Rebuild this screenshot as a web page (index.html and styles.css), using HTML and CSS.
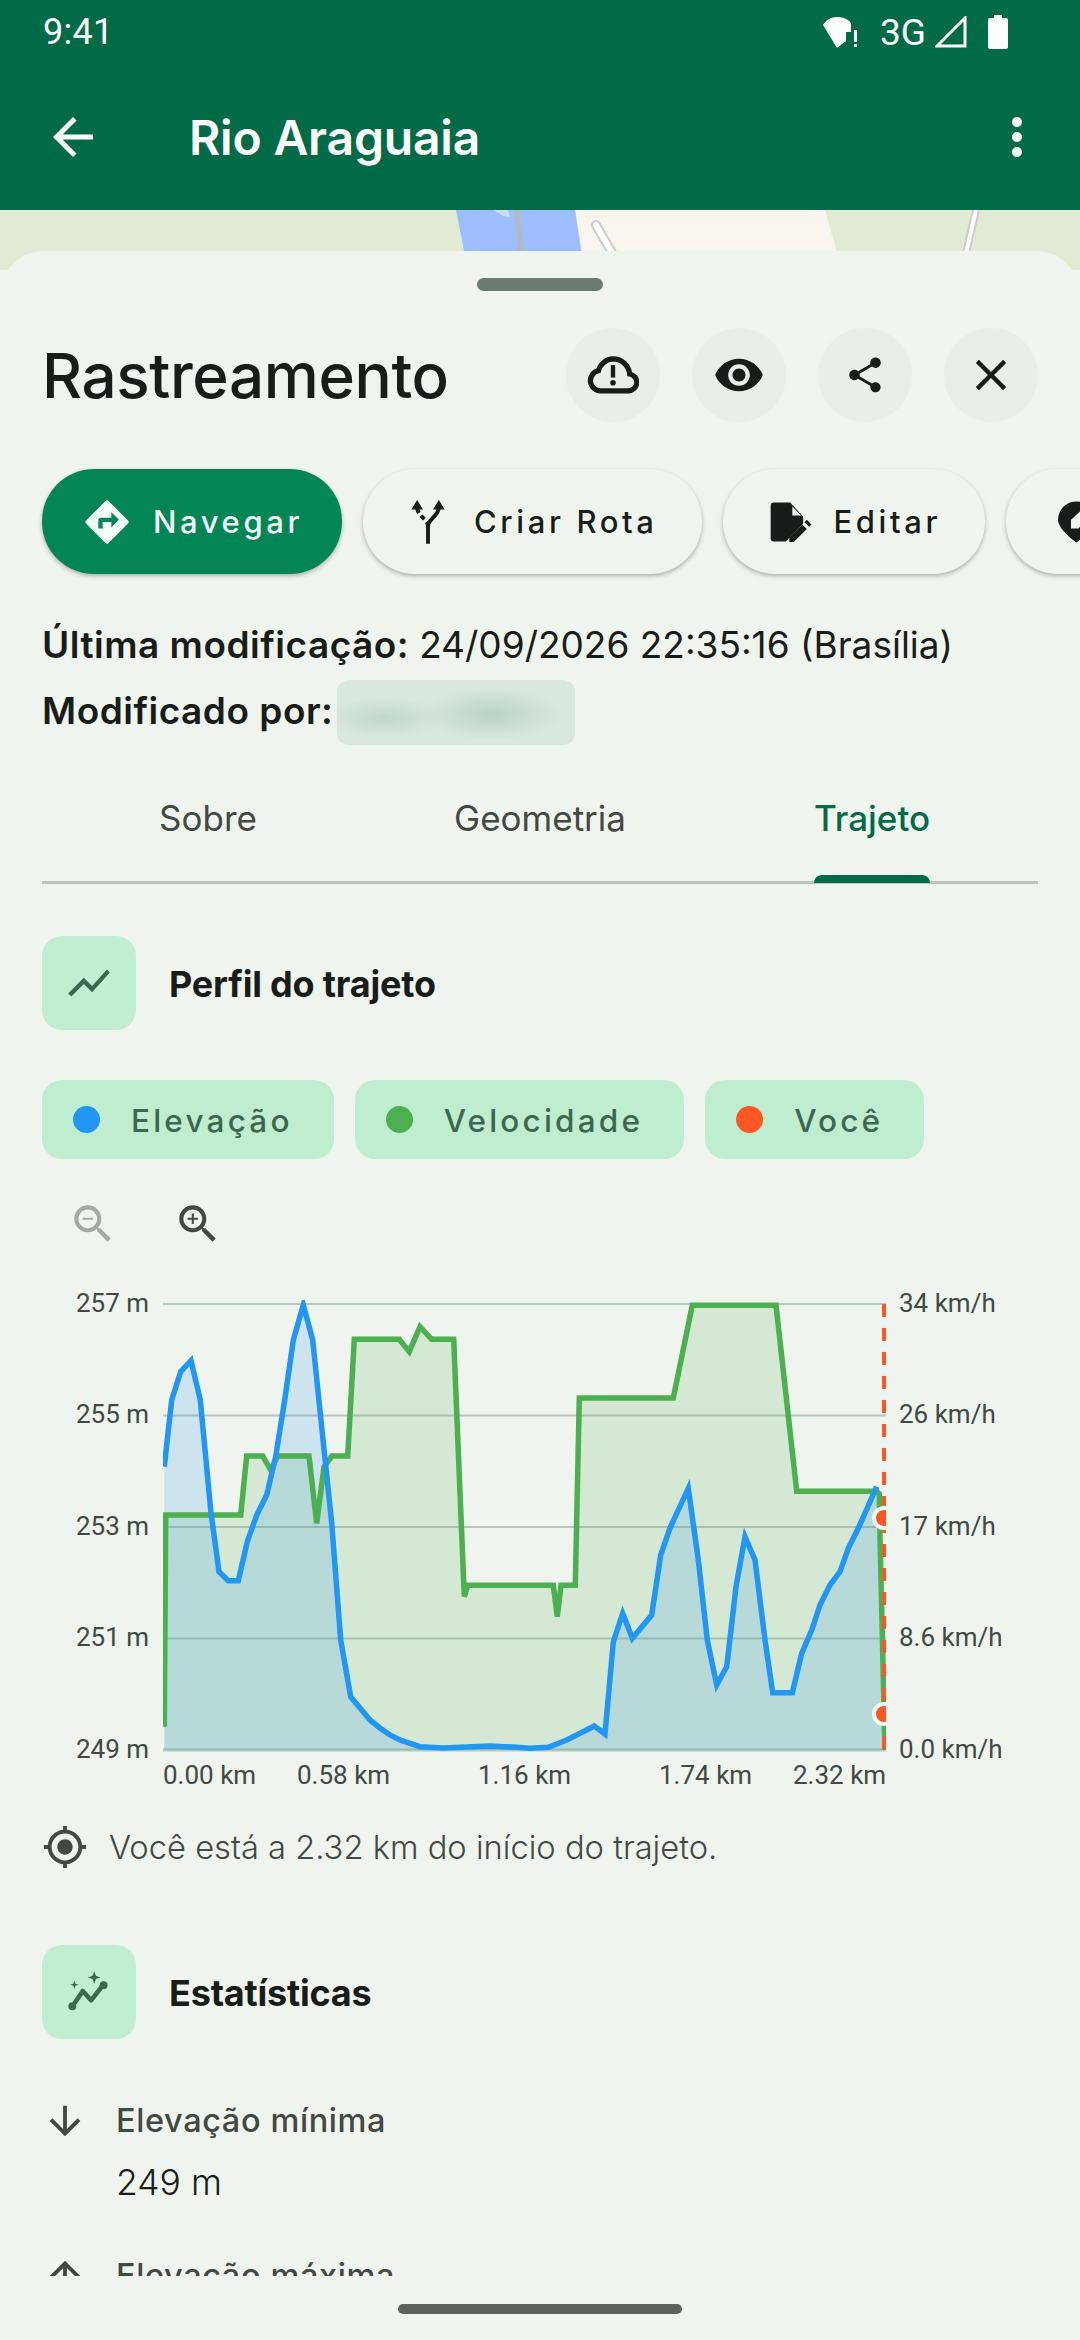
FILE: index.html
```html
<!DOCTYPE html>
<html lang="pt">
<head>
<meta charset="utf-8">
<title>Rio Araguaia</title>
<link rel="stylesheet" href="styles.css">
</head>
<body>
<div class="app">
  <header class="top">
    <div class="status">
      <span class="time">9:41</span>
      <div class="status-icons">
        <svg class="st-wifi" viewBox="0 0 38 32"><path d="M14 32 0 9C3 4 8 1 14 1s11 2 14 6v9h-5v9z"/><rect x="31" y="14" width="3" height="12"/><rect x="31" y="28" width="3" height="3"/></svg>
        <span class="net">3G</span>
        <svg class="st-signal" viewBox="0 0 32 32"><path d="M30 2v28H2z" fill="none" stroke="#fff" stroke-width="3"/></svg>
        <svg class="st-batt" viewBox="0 0 20 34"><path d="M6 0h8v3h4a2 2 0 0 1 2 2v27a2 2 0 0 1-2 2H2a2 2 0 0 1-2-2V5a2 2 0 0 1 2-2h4z"/></svg>
      </div>
    </div>
    <div class="appbar">
      <svg class="ic ic-white ic-bar" viewBox="0 0 24 24"><path d="M20 11H7.83l5.59-5.59L12 4l-8 8 8 8 1.41-1.41L7.83 13H20v-2z"/></svg>
      <h1 class="apptitle">Rio Araguaia</h1>
      <svg class="ic ic-white ic-bar ic-more" viewBox="0 0 24 24"><path d="M12 8c1.1 0 2-.9 2-2s-.9-2-2-2-2 .9-2 2 .9 2 2 2zm0 2c-1.1 0-2 .9-2 2s.9 2 2 2 2-.9 2-2-.9-2-2-2zm0 6c-1.1 0-2 .9-2 2s.9 2 2 2 2-.9 2-2-.9-2-2-2z"/></svg>
    </div>
  </header>

  <main class="mapwrap">
    <svg class="mapbg" viewBox="0 210 1080 60" preserveAspectRatio="xMinYMin slice">
      <rect x="0" y="210" width="1080" height="60" fill="#e1ebd3"/>
      <polygon points="575,210 825,210 842,270 585,270" fill="#f8f5ef"/>
      <polygon points="456,210 575,210 584,270 468,270" fill="#9dbdff"/>
      <polygon points="494,210 508,210 510,217 503,216" fill="#cfdcf8"/>
      <path d="M516.5 210 523 270" stroke="#b5b9bd" stroke-width="5" fill="none"/>
      <path d="M596 225 622 270" stroke="#cfcdcb" stroke-width="10" fill="none" stroke-linecap="round"/>
      <path d="M596 225 622 270" stroke="#fff" stroke-width="6" fill="none" stroke-linecap="round"/>
      <path d="M976 210 962 270" stroke="#cfcdcb" stroke-width="8" fill="none"/>
      <path d="M976 210 962 270" stroke="#fff" stroke-width="4" fill="none"/>
    </svg>

    <section class="sheet">
      <div class="handle"></div>
      <div class="scroll">
        <div class="title-row">
          <h2 class="title">Rastreamento</h2>
          <div class="actions">
            <button class="round"><svg class="ic" viewBox="0 0 24 24"><path d="M6.200 19.300H19a3.900 3.900 0 0 0 .7-7.750A7.700 7.700 0 0 0 12 4.600a7.200 7.200 0 0 0-6.700 5.400 4.700 4.700 0 0 0 .9 9.300z" fill="none" stroke="#191d19" stroke-width="2.400"/><rect x="11" y="7.400" width="2" height="5.800"/><circle cx="12" cy="15.600" r="1.300"/></svg></button>
            <button class="round"><svg class="ic" viewBox="0 0 24 24"><path d="M12 4.500C7 4.500 2.730 7.610 1 12c1.730 4.390 6 7.500 11 7.500s9.270-3.110 11-7.500c-1.730-4.390-6-7.500-11-7.500zM12 17c-2.760 0-5-2.240-5-5s2.240-5 5-5 5 2.240 5 5-2.240 5-5 5zm0-8c-1.660 0-3 1.340-3 3s1.340 3 3 3 3-1.340 3-3-1.340-3-3-3z"/></svg></button>
            <button class="round"><svg class="ic ic-share" viewBox="0 0 24 24"><path d="M18 16.080c-.76 0-1.440.3-1.960.77L8.910 12.700c.05-.23.09-.46.09-.7s-.04-.47-.09-.7l7.050-4.110c.54.5 1.250.81 2.040.81 1.660 0 3-1.340 3-3s-1.340-3-3-3-3 1.340-3 3c0 .24.04.47.09.7L8.040 9.810C7.500 9.310 6.790 9 6 9c-1.660 0-3 1.340-3 3s1.340 3 3 3c.79 0 1.500-.31 2.040-.81l7.120 4.160c-.05.21-.08.43-.08.65 0 1.610 1.310 2.920 2.920 2.920s2.920-1.310 2.920-2.920-1.310-2.920-2.920-2.920z"/></svg></button>
            <button class="round"><svg class="ic" viewBox="0 0 24 24"><path d="M19 6.410L17.590 5 12 10.590 6.410 5 5 6.410 10.590 12 5 17.590 6.410 19 12 13.410 17.590 19 19 17.590 13.410 12z"/></svg></button>
          </div>
        </div>

        <div class="chips">
          <button class="chip chip-primary"><svg class="ic" viewBox="0 0 24 24"><path d="M21.710 11.290l-9-9c-.39-.39-1.020-.39-1.410 0l-9 9c-.39.39-.39 1.020 0 1.410l9 9c.39.39 1.020.39 1.410 0l9-9c.39-.38.39-1.010 0-1.410zM14 14.500V12h-4v3H8v-4c0-.55.45-1 1-1h5V7.500l3.500 3.500-3.500 3.500z"/></svg><span>Navegar</span></button>
          <button class="chip"><svg class="ic" viewBox="0 0 24 24"><path d="M12 22v-8c0-3.500 5-4.500 5-9" fill="none" stroke="#191d19" stroke-width="1.800"/><path d="M12 14c0-3.500-5-4.500-5-9" fill="none" stroke="#191d19" stroke-width="1.800" stroke-dasharray="2.200 1.600"/><path d="M17 1.800l2.700 4.400h-5.400zM7 1.800l2.700 4.400H4.300z"/></svg><span>Criar Rota</span></button>
          <button class="chip"><svg class="ic" viewBox="0 0 24 24"><path fill-rule="evenodd" d="M5.500 3H13l6 6.500v3.200L11 21H5.500A1.500 1.500 0 0 1 4 19.500v-15A1.500 1.500 0 0 1 5.500 3zm8.500 1.800V9h4z"/><path d="M12.600 21.200v-2.100l6-6 2.100 2.100-6 6zM19.600 12.100l1.100-1.100 2.100 2.100-1.100 1.100z"/></svg><span>Editar</span></button>
          <button class="chip chip-cut" aria-label="Marcar"><svg class="ic" viewBox="0 0 24 24"><path d="M14.500 2.500A8.500 8.500 0 0 0 6 11c0 4.600 8.500 10.500 8.500 10.500S23 15.600 23 11a8.500 8.500 0 0 0-8.500-8.500z"/><path d="M12 15v-4l7-6.500 3 3-6.500 7.500z" fill="#eff4ee"/></svg></button>
        </div>

        <div class="meta">
          <p class="meta-line"><b>Última modificação:</b><span>24/09/2026 22:35:16 (Brasília)</span></p>
          <p class="meta-line"><b>Modificado por:</b><span class="blurred"></span></p>
        </div>

        <nav class="tabs">
          <div class="tab"><span class="tab-label">Sobre</span></div>
          <div class="tab"><span class="tab-label">Geometria</span></div>
          <div class="tab tab-on"><span class="tab-label">Trajeto</span></div>
        </nav>

        <div class="sec-head sec-first">
          <div class="sec-icon"><svg class="ic ic-sec" viewBox="0 0 24 24"><path d="M3.500 18.490l6-6.010 4 4L22 6.920l-1.410-1.410-7.090 7.970-4-4L2 16.990z"/></svg></div>
          <h3 class="sec-title">Perfil do trajeto</h3>
        </div>

        <div class="filters">
          <div class="filter"><i class="dot dot-blue"></i><span>Elevação</span></div>
          <div class="filter"><i class="dot dot-green"></i><span>Velocidade</span></div>
          <div class="filter"><i class="dot dot-orange"></i><span>Você</span></div>
        </div>

        <div class="zooms">
          <svg class="ic ic-zoom ic-off" viewBox="0 0 24 24"><path d="M15.500 14h-.79l-.28-.27C15.410 12.590 16 11.110 16 9.500 16 5.910 13.090 3 9.500 3S3 5.910 3 9.500 5.910 16 9.500 16c1.610 0 3.090-.59 4.230-1.570l.27.28v.79l5 4.990L20.490 19l-4.990-5zm-6 0C7.010 14 5 11.990 5 9.500S7.010 5 9.500 5 14 7.010 14 9.500 11.990 14 9.500 14zM7 9h5v1H7z"/></svg>
          <svg class="ic ic-zoom" viewBox="0 0 24 24"><path d="M15.500 14h-.79l-.28-.27C15.410 12.590 16 11.110 16 9.500 16 5.910 13.090 3 9.500 3S3 5.910 3 9.500 5.910 16 9.500 16c1.610 0 3.090-.59 4.230-1.570l.27.28v.79l5 4.990L20.490 19l-4.990-5zm-6 0C7.010 14 5 11.990 5 9.500S7.010 5 9.500 5 14 7.010 14 9.500 11.990 14 9.500 14zM12 10h-2v2H9v-2H7V9h2V7h1v2h2v1z"/></svg>
        </div>

        <svg class="chart" viewBox="42 1280 1000 520">
          <defs><clipPath id="plot"><rect x="163" y="1300" width="723" height="453"/></clipPath></defs>
          <g class="grid">
            <line x1="163" x2="886" y1="1304" y2="1304"/>
            <line x1="163" x2="886" y1="1415.500" y2="1415.500"/>
            <line x1="163" x2="886" y1="1527" y2="1527"/>
            <line x1="163" x2="886" y1="1638.500" y2="1638.500"/>
            <line x1="163" x2="886" y1="1750" y2="1750" class="grid-base"/>
          </g>
          <g class="lab lab-end">
            <text x="149" y="1312">257 m</text><text x="149" y="1423">255 m</text><text x="149" y="1535">253 m</text><text x="149" y="1646">251 m</text><text x="149" y="1758">249 m</text>
          </g>
          <g class="lab">
            <text x="899" y="1312">34 km/h</text><text x="899" y="1423">26 km/h</text><text x="899" y="1535">17 km/h</text><text x="899" y="1646">8.6 km/h</text><text x="899" y="1758">0.0 km/h</text>
            <text x="163" y="1784">0.00 km</text><text x="297" y="1784">0.58 km</text><text x="478" y="1784">1.16 km</text><text x="659" y="1784">1.74 km</text><text x="793" y="1784">2.32 km</text>
          </g>
          <g clip-path="url(#plot)">
            <polygon class="fill-green" points="164.300,1750 164.300,1726.700 165.700,1515 240.700,1515 246.700,1456 262.700,1456 270.700,1470 277.700,1456 309,1456 316.700,1523.300 324,1466.700 332,1456 347.700,1456 354.300,1339.300 399.300,1339.300 409.300,1351.700 420,1326.700 431.700,1339.300 453.700,1339.300 464.300,1596.700 467.700,1585.300 553.300,1585.300 557.300,1616.700 561,1585.300 575.300,1585.300 579.300,1398 673.300,1398 692.300,1305.300 776,1305.300 796.700,1491.300 876.700,1491.300 879.300,1494 880,1536.700 885,1750"/>
            <polygon class="fill-blue" points="164.300,1750 164.300,1466.700 171.700,1400 180.700,1371.700 191,1360.700 200.300,1400 211,1513 219,1571.700 228.300,1580.700 238.300,1580.700 247.300,1541.700 256.700,1515 266.700,1495 275.700,1456.700 285,1398 293.300,1340 303.300,1305 312.700,1340 322.700,1436.700 331.700,1523 340.700,1640 350.700,1696.700 360,1708 370,1720 380,1728 390,1735 400,1740 420,1746.700 443,1748 490,1746 516.700,1747.300 530,1748.300 548.300,1747.300 566.700,1740 594.300,1726 605,1734 613.300,1641.700 622.700,1613.300 632.300,1638.300 651.700,1615 660.700,1555 670,1528 688.300,1488.300 698.300,1560 707.300,1640 716.700,1685 726.700,1666.700 736,1586.700 745,1536.700 755,1560 765,1640 772.700,1692.700 792.300,1692.700 801.700,1653.300 811.700,1630 820,1605 830,1585 840,1571.700 848.300,1548.300 858.300,1528.300 876.700,1486.700 884,1750"/>
            <polyline class="line-green" points="164.300,1726.700 165.700,1515 240.700,1515 246.700,1456 262.700,1456 270.700,1470 277.700,1456 309,1456 316.700,1523.300 324,1466.700 332,1456 347.700,1456 354.300,1339.300 399.300,1339.300 409.300,1351.700 420,1326.700 431.700,1339.300 453.700,1339.300 464.300,1596.700 467.700,1585.300 553.300,1585.300 557.300,1616.700 561,1585.300 575.300,1585.300 579.300,1398 673.300,1398 692.300,1305.300 776,1305.300 796.700,1491.300 876.700,1491.300 879.300,1494 880,1536.700 885,1750"/>
            <polyline class="line-blue" points="164.300,1466.700 171.700,1400 180.700,1371.700 191,1360.700 200.300,1400 211,1513 219,1571.700 228.300,1580.700 238.300,1580.700 247.300,1541.700 256.700,1515 266.700,1495 275.700,1456.700 285,1398 293.300,1340 303.300,1305 312.700,1340 322.700,1436.700 331.700,1523 340.700,1640 350.700,1696.700 360,1708 370,1720 380,1728 390,1735 400,1740 420,1746.700 443,1748 490,1746 516.700,1747.300 530,1748.300 548.300,1747.300 566.700,1740 594.300,1726 605,1734 613.300,1641.700 622.700,1613.300 632.300,1638.300 651.700,1615 660.700,1555 670,1528 688.300,1488.300 698.300,1560 707.300,1640 716.700,1685 726.700,1666.700 736,1586.700 745,1536.700 755,1560 765,1640 772.700,1692.700 792.300,1692.700 801.700,1653.300 811.700,1630 820,1605 830,1585 840,1571.700 848.300,1548.300 858.300,1528.300 876.700,1486.700"/>
            <line class="marker" x1="884" x2="884" y1="1304" y2="1750"/>
            <circle class="pin" cx="884" cy="1518" r="10"/>
            <circle class="pin" cx="884" cy="1714" r="10"/>
          </g>
        </svg>

        <div class="here">
          <svg class="ic ic-here" viewBox="0 0 24 24"><path d="M12 8c-2.210 0-4 1.790-4 4s1.790 4 4 4 4-1.790 4-4-1.790-4-4-4zm8.940 3c-.46-4.170-3.770-7.480-7.940-7.940V1h-2v2.060C6.830 3.520 3.520 6.830 3.060 11H1v2h2.060c.46 4.170 3.770 7.480 7.940 7.940V23h2v-2.060c4.170-.46 7.480-3.770 7.940-7.940H23v-2h-2.060zM12 19c-3.870 0-7-3.130-7-7s3.130-7 7-7 7 3.130 7 7-3.130 7-7 7z"/></svg>
          <span>Você está a 2.32 km do início do trajeto.</span>
        </div>

        <div class="sec-head sec-stats">
          <div class="sec-icon"><svg class="ic ic-sec" viewBox="0 0 24 24"><path d="M4 19l5-7.500 4 4.500 5.500-7" fill="none" stroke="#3e6751" stroke-width="2.200" stroke-linecap="round" stroke-linejoin="round"/><circle cx="4" cy="18.800" r="1.900"/><circle cx="19" cy="8.700" r="1.900"/><path d="M14.500 2l.8 2.200 2.200.8-2.200.8-.8 2.200-.8-2.200-2.200-.8 2.200-.8zM5 6.500l.5 1.500 1.500.5-1.500.5-.5 1.500-.5-1.500L3 8.500l1.500-.5z"/></svg></div>
          <h3 class="sec-title">Estatísticas</h3>
        </div>

        <div class="stat stat-first">
          <svg class="ic ic-stat" viewBox="0 0 24 24"><path d="M20 12l-1.410-1.410L13 16.170V4h-2v12.170l-5.580-5.590L4 12l8 8 8-8z"/></svg>
          <div><div class="stat-label">Elevação mínima</div><div class="stat-value">249 m</div></div>
        </div>
        <div class="stat">
          <svg class="ic ic-stat" viewBox="0 0 24 24"><path d="M4 12l1.410 1.410L11 7.830V20h2V7.830l5.580 5.590L20 12l-8-8-8 8z"/></svg>
          <div><div class="stat-label">Elevação máxima</div></div>
        </div>
      </div>
      <footer class="navbar"><div class="pill"></div></footer>
    </section>
  </main>
</div>
</body>
</html>
```
FILE: styles.css
```css
* { box-sizing: border-box; margin: 0; padding: 0; }
html, body { width: 1080px; height: 2340px; overflow: hidden; }
body { font-family: "Inter", "Noto Sans", sans-serif; color: #191d19; background: #eff4ee; }
.app { width: 1080px; height: 2340px; display: flex; flex-direction: column; }

.top { background: #016a46; color: #fff; height: 210px; flex: none; }
.status { height: 64px; padding: 0 72px 0 43px; display: flex; justify-content: space-between; align-items: center; }
.time { font-family: "Roboto", sans-serif; font-size: 36px; letter-spacing: .3px; }
.status-icons { display: flex; align-items: center; fill: #fff; }
.st-wifi { width: 38px; height: 32px; margin-right: 19px; }
.st-signal { width: 32px; height: 32px; margin-left: 9px; }
.st-batt { width: 20px; height: 34px; margin-left: 21px; }
.net { font-family: "Roboto", sans-serif; font-size: 37px; }
.appbar { height: 146px; display: flex; align-items: center; padding-left: 43px; }
.apptitle { font-size: 48px; font-weight: 600; margin-left: 86px; flex: 1; letter-spacing: -.2px; }

.ic { width: 52px; height: 52px; display: block; fill: #191d19; flex: none; }
.ic-white { fill: #fff; }
.ic-bar { width: 60px; height: 60px; }
.ic-more { margin-right: 33px; }
.ic-share { width: 42px; height: 42px; }

.mapwrap { position: relative; flex: 1; min-height: 0; display: flex; flex-direction: column; padding-top: 41px; }
.mapbg { position: absolute; top: 0; left: 0; width: 1080px; height: 60px; }
.sheet { position: relative; flex: 1; min-height: 0; background: #eff4ee; border-radius: 44px 44px 0 0; display: flex; flex-direction: column; }
.handle { width: 126px; height: 13px; border-radius: 7px; background: #6c7b71; margin: 27px auto 0; flex: none; }
.scroll { flex: 1; min-height: 0; overflow: hidden; }
.navbar { height: 64px; flex: none; display: flex; justify-content: center; padding-top: 28px; }
.pill { width: 284px; height: 10px; border-radius: 5px; background: #5f625f; }

.title-row { margin-top: 37px; padding: 0 42px; height: 94px; display: flex; justify-content: space-between; align-items: center; }
.title { font-size: 62px; font-weight: 500; letter-spacing: -.4px; }
.actions { display: flex; gap: 32px; }
.round { width: 94px; height: 94px; border: 0; border-radius: 50%; background: #e8efe8; display: flex; align-items: center; justify-content: center; }

.chips { margin-top: 47px; padding-left: 42px; display: flex; gap: 21px; width: 1400px; height: 108px; }
.chip { flex: none; height: 105px; border: 0; border-radius: 52px; padding: 0 44px 0 39px; background: #eff4ee; display: flex; align-items: center; gap: 20px; font-family: "Inter", sans-serif; font-size: 31px; font-weight: 500; letter-spacing: 3.6px; color: #191d19; box-shadow: 0 2px 4px rgba(0,0,0,.28); }
.chip-primary { background: #038556; color: #f2fff8; padding-right: 39px; }
.chip-primary .ic { fill: #f2fff8; }
.chip-cut { width: 200px; }

.meta { margin-top: 34px; padding: 0 42px; }
.meta-line { height: 66px; display: flex; align-items: center; font-size: 37px; gap: 10px; white-space: pre; }
.meta-line b { font-weight: 600; letter-spacing: .5px; }
.blurred { width: 238px; height: 65px; margin-top: 4px; margin-left: -6px; border-radius: 12px; background: radial-gradient(ellipse 70px 26px at 65% 52%, #b9d4c5, transparent), radial-gradient(ellipse 60px 20px at 20% 58%, #bfd8ca, transparent), #d9e7df; }

.tabs { margin: 32px 42px 0; height: 109px; display: grid; grid-template-columns: repeat(3, 1fr); border-bottom: 3px solid #b9c6bc; }
.tab { display: flex; justify-content: center; font-size: 35px; color: #414942; padding-top: 20px; }
.tab-label { position: relative; height: 86px; line-height: 46px; }
.tab-on { color: #016a46; font-weight: 500; }
.tab-on .tab-label::after { content: ""; position: absolute; left: 0; right: 0; bottom: -2px; height: 8px; background: #016a46; border-radius: 8px 8px 0 0; }

.sec-head { display: flex; align-items: center; padding: 0 42px; gap: 33px; }
.sec-first { margin-top: 52px; }
.sec-stats { margin-top: 73px; }
.sec-icon { width: 94px; height: 94px; border-radius: 20px; background: #c1edd2; display: flex; align-items: center; justify-content: center; flex: none; }
.ic-sec { fill: #3e6751; width: 50px; height: 50px; }
.sec-title { font-size: 36px; font-weight: 700; letter-spacing: -.2px; padding-top: 2px; }

.filters { margin-top: 50px; padding: 0 42px; display: flex; gap: 21px; }
.filter { height: 79px; border-radius: 20px; background: #bfedd0; padding: 2px 41px 0 31px; display: flex; align-items: center; gap: 31px; color: #3e6751; font-size: 31.5px; font-weight: 500; letter-spacing: 3.2px; }
.dot { width: 27px; height: 27px; border-radius: 50%; display: block; flex: none; margin-top: -2px; }
.dot-blue { background: #2196f3; }
.dot-green { background: #4caf50; }
.dot-orange { background: #ff5722; }

.zooms { margin-top: 40px; padding-left: 68px; display: flex; gap: 55px; height: 50px; }
.ic-zoom { width: 50px; height: 50px; fill: #414942; }
.ic-off { fill: #a3a9a4; }

.chart { display: block; width: 1000px; height: 520px; margin: 31px 0 0 42px; overflow: visible; }
.grid line { stroke: #b9c6bc; stroke-width: 2; }
.grid .grid-base { stroke-width: 3; }
.lab { font-family: "Roboto", sans-serif; font-size: 26px; fill: #414942; }
.lab-end { text-anchor: end; }
.fill-green { fill: #4caf50; fill-opacity: .16; }
.fill-blue { fill: #2196f3; fill-opacity: .16; }
.line-green { fill: none; stroke: #4caf50; stroke-width: 5.5; stroke-linejoin: miter; }
.line-blue { fill: none; stroke: #2196f3; stroke-width: 5.5; stroke-linejoin: miter; }
.marker { stroke: #ff5722; stroke-width: 4; stroke-dasharray: 13 11; }
.pin { fill: #ff5722; stroke: #f7faf6; stroke-width: 4; }

.here { margin-top: 22px; padding: 0 42px; height: 50px; display: flex; align-items: center; gap: 21px; font-size: 32.7px; font-weight: 300; color: #414942; }
.ic-here { width: 46px; height: 46px; fill: #414942; }

.stat { margin-top: 31px; height: 124px; padding: 0 42px; display: flex; gap: 28px; }
.stat-first { margin-top: 57px; }
.ic-stat { width: 46px; height: 46px; fill: #414942; margin-top: 2px; }
.stat-label { font-size: 32.5px; font-weight: 500; color: #414942; line-height: 50px; letter-spacing: .6px; }
.stat-value { font-size: 35.5px; font-weight: 300; line-height: 50px; margin-top: 12px; }
```
